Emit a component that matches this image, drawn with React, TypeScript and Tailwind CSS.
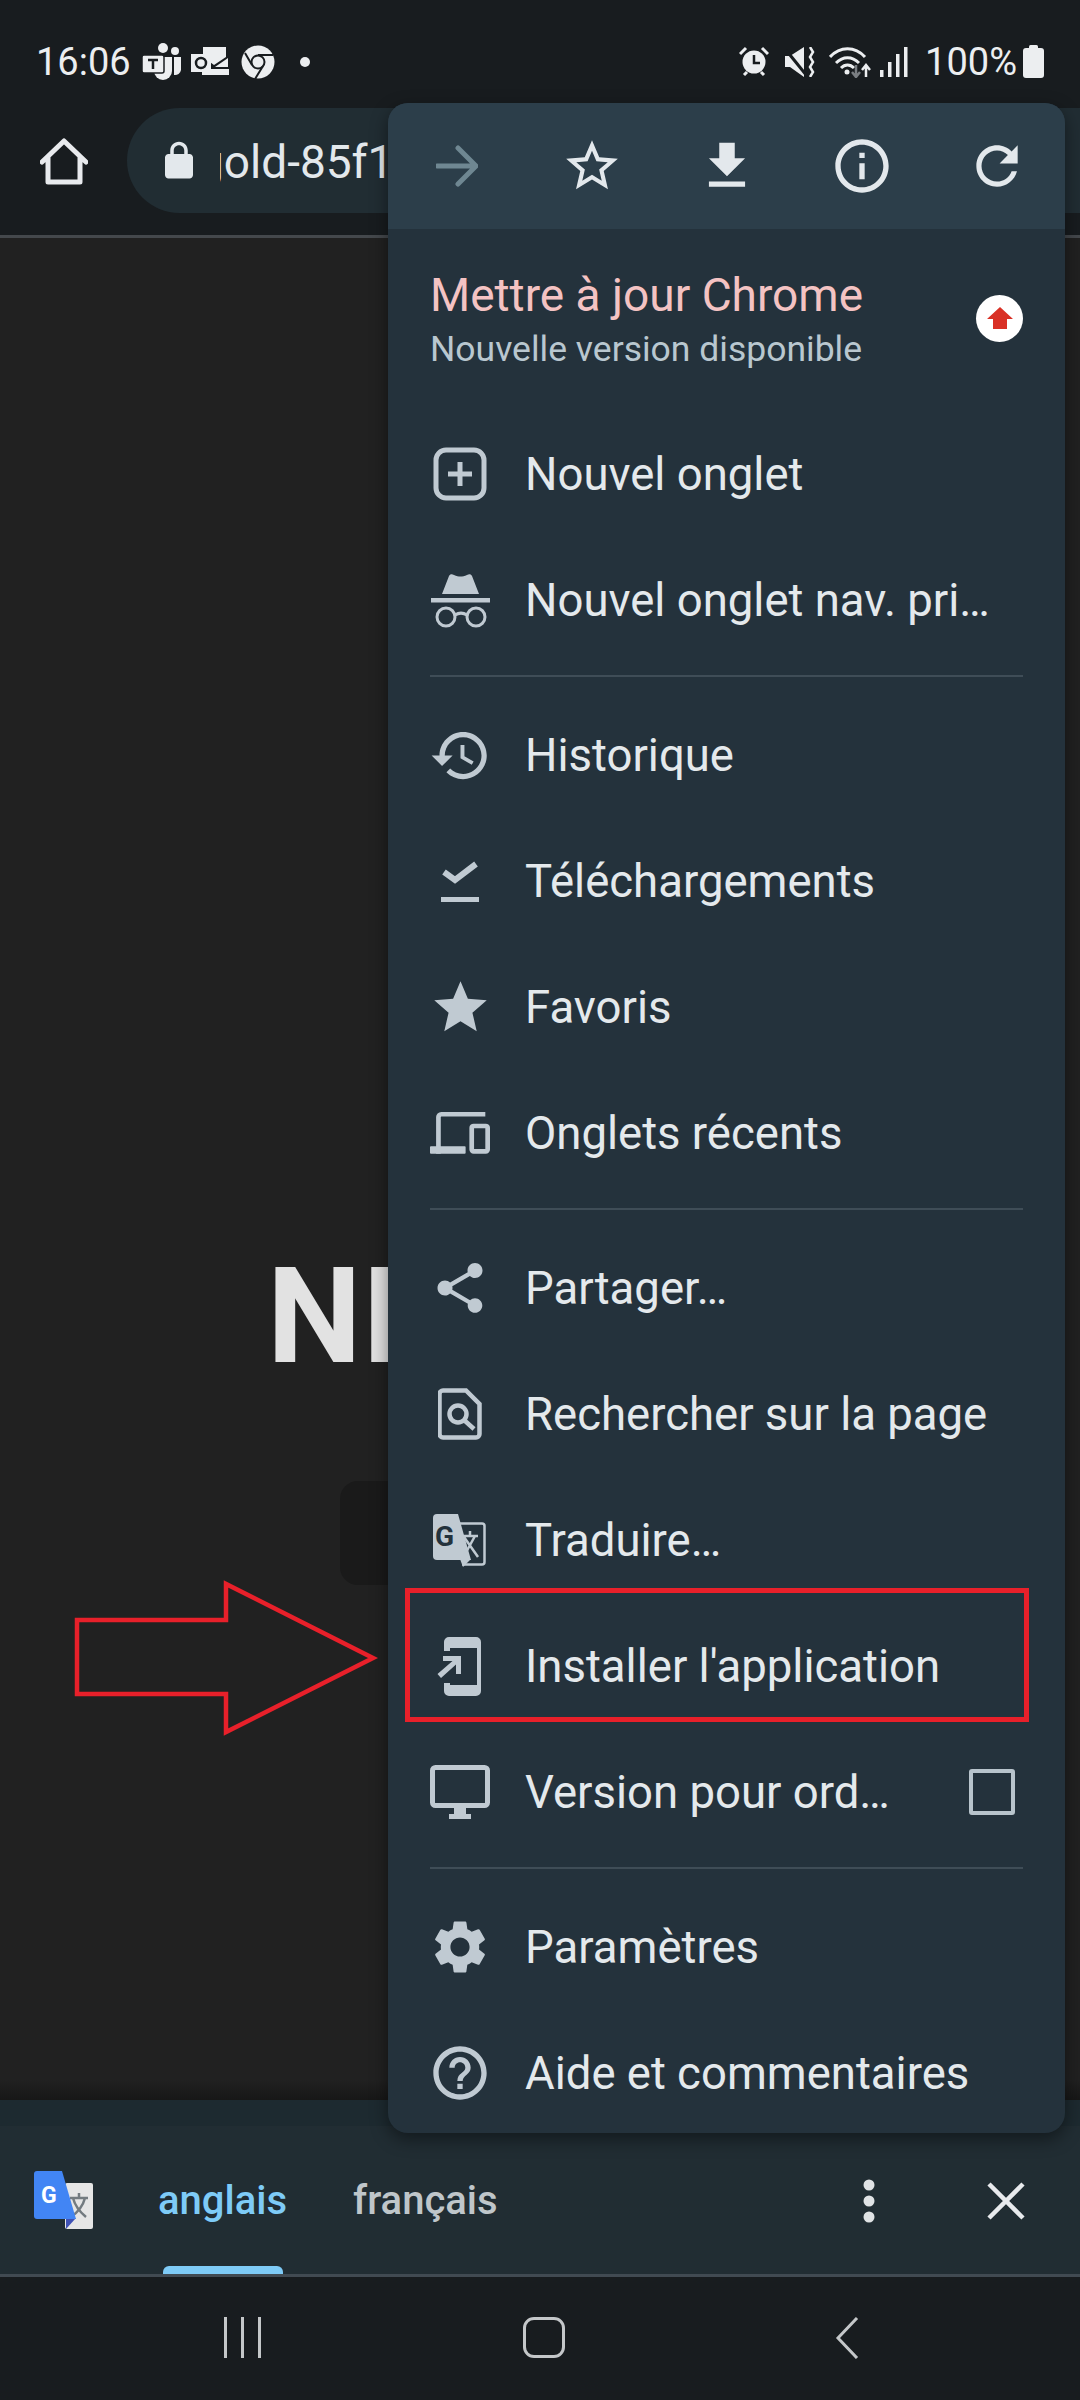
import type { ReactNode } from 'react';

const P = {
  lock: 'M18 8h-1V6c0-2.76-2.24-5-5-5S7 3.24 7 6v2H6c-1.1 0-2 .9-2 2v10c0 1.1.9 2 2 2h12c1.1 0 2-.9 2-2V10c0-1.1-.9-2-2-2zM9 6c0-1.66 1.34-3 3-3s3 1.34 3 3v2H9V6z',
  starOutline: 'M22 9.24l-7.19-.62L12 2 9.19 8.63 2 9.24l5.46 4.73L5.82 21 12 17.27 18.18 21l-1.63-7.03L22 9.24zM12 15.4l-3.76 2.27 1-4.28-3.32-2.88 4.38-.38L12 6.1l1.71 4.04 4.38.38-3.32 2.88 1 4.28L12 15.4z',
  download: 'M19 9h-4V3H9v6H5l7 7 7-7zM5 18v2h14v-2H5z',
  info: 'M11 7h2v2h-2zm0 4h2v6h-2zm1-9C6.48 2 2 6.48 2 12s4.48 10 10 10 10-4.48 10-10S17.52 2 12 2zm0 18c-4.41 0-8-3.59-8-8s3.59-8 8-8 8 3.59 8 8-3.59 8-8 8z',
  refresh: 'M17.65 6.35C16.2 4.9 14.21 4 12 4c-4.42 0-7.99 3.58-7.99 8s3.57 8 7.99 8c3.73 0 6.84-2.55 7.73-6h-2.08c-.82 2.33-3.04 4-5.65 4-3.31 0-6-2.69-6-6s2.69-6 6-6c1.66 0 3.14.69 4.22 1.78L13 11h7V4l-2.35 2.35z',
  history: 'M13 3c-4.97 0-9 4.03-9 9H1l3.89 3.89.07.14L9 12H6c0-3.87 3.13-7 7-7s7 3.13 7 7-3.13 7-7 7c-1.93 0-3.68-.79-4.94-2.06l-1.42 1.42C8.27 19.99 10.51 21 13 21c4.97 0 9-4.03 9-9s-4.03-9-9-9zm-1 5v5l4.28 2.54.72-1.21-3.5-2.08V8H12z',
  star: 'M12 17.27L18.18 21l-1.64-7.03L22 9.24l-7.19-.61L12 2 9.19 8.63 2 9.24l5.46 4.73L5.82 21z',
  share: 'M18 16.08c-.76 0-1.44.3-1.96.77L8.91 12.7c.05-.23.09-.46.09-.7s-.04-.47-.09-.7l7.05-4.11c.54.5 1.25.81 2.04.81 1.66 0 3-1.34 3-3s-1.34-3-3-3-3 1.34-3 3c0 .24.04.47.09.7L8.04 9.81C7.5 9.31 6.79 9 6 9c-1.66 0-3 1.34-3 3s1.34 3 3 3c.79 0 1.5-.31 2.04-.81l7.12 4.16c-.05.21-.08.43-.08.65 0 1.61 1.31 2.92 2.92 2.92 1.61 0 2.92-1.31 2.92-2.92s-1.31-2.92-2.92-2.92z',
  settings: 'M19.14 12.94c.04-.3.06-.61.06-.94 0-.32-.02-.64-.07-.94l2.03-1.58c.18-.14.23-.41.12-.61l-1.92-3.32c-.12-.22-.37-.29-.59-.22l-2.39.96c-.5-.38-1.03-.7-1.62-.94l-.36-2.54c-.04-.24-.24-.41-.48-.41h-3.84c-.24 0-.43.17-.47.41l-.36 2.54c-.59.24-1.13.57-1.62.94l-2.39-.96c-.22-.08-.47 0-.59.22L2.74 8.87c-.12.21-.08.47.12.61l2.03 1.58c-.05.3-.09.63-.09.94s.02.64.07.94l-2.03 1.58c-.18.14-.23.41-.12.61l1.92 3.32c.12.22.37.29.59.22l2.39-.96c.5.38 1.03.7 1.62.94l.36 2.54c.05.24.24.41.48.41h3.84c.24 0 .44-.17.47-.41l.36-2.54c.59-.24 1.13-.56 1.62-.94l2.39.96c.22.08.47 0 .59-.22l1.92-3.32c.12-.22.07-.47-.12-.61l-2.01-1.58zM12 15.6c-1.98 0-3.6-1.62-3.6-3.6s1.62-3.6 3.6-3.6 3.6 1.62 3.6 3.6-1.62 3.6-3.6 3.6z',
  help: 'M11 18h2v-2h-2v2zm1-16C6.48 2 2 6.48 2 12s4.48 10 10 10 10-4.48 10-10S17.52 2 12 2zm0 18c-4.41 0-8-3.59-8-8s3.59-8 8-8 8 3.59 8 8-3.59 8-8 8zm0-14c-2.21 0-4 1.79-4 4h2c0-1.1.9-2 2-2s2 .9 2 2c0 2-3 1.75-3 5h2c0-2.25 3-2.5 3-5 0-2.21-1.79-4-4-4z',
};

function Mi({ d, className }: { d: string; className?: string }) {
  return (
    <svg viewBox="0 0 24 24" fill="currentColor" className={className}>
      <path d={d} />
    </svg>
  );
}

function Draw({ w, h, children, className }: { w: number; h: number; children: ReactNode; className?: string }) {
  return (
    <svg viewBox={`0 0 ${w} ${h}`} width={w} height={h} className={className} fill="none">
      {children}
    </svg>
  );
}

const NewTabIcon = (
  <Draw w={54} h={54}>
    <rect x="3" y="3" width="48" height="48" rx="10" stroke="currentColor" strokeWidth="5" />
    <path d="M27 15v24M15 27h24" stroke="currentColor" strokeWidth="5" />
  </Draw>
);

const IncognitoIcon = (
  <Draw w={59} h={56}>
    <path d="M11 22L18 4c1-2 3-2 5-1 5 2 8 2 13 0 2-1 4-1 5 1l7 18z" fill="currentColor" />
    <rect x="0" y="26" width="59" height="4.500" fill="currentColor" />
    <circle cx="15" cy="45" r="9" stroke="currentColor" strokeWidth="3" />
    <circle cx="45" cy="45" r="9" stroke="currentColor" strokeWidth="3" />
    <path d="M24 43c4-2.500 8-2.500 12 0" stroke="currentColor" strokeWidth="3" />
  </Draw>
);

const DownloadsIcon = (
  <Draw w={38} h={42}>
    <path d="M3 12l11 8L35 4" stroke="currentColor" strokeWidth="6" />
    <rect x="0" y="37" width="38" height="5" fill="currentColor" />
  </Draw>
);

const DevicesIcon = (
  <Draw w={64} h={44}>
    <path d="M9 44V5a3 3 0 0 1 3-3h47" stroke="currentColor" strokeWidth="5" />
    <rect x="0" y="36" width="38" height="8" rx="1" fill="currentColor" />
    <rect x="44.500" y="14.500" width="17" height="27" rx="2" stroke="currentColor" strokeWidth="5" />
  </Draw>
);

const FindIcon = (
  <Draw w={44} h={52}>
    <path d="M5 2.500h23L41.500 16v30a3.500 3.500 0 0 1-3.500 3.500H5A3.500 3.500 0 0 1 1.500 46V6A3.500 3.500 0 0 1 5 2.500z" stroke="currentColor" strokeWidth="4.500" />
    <circle cx="20" cy="26" r="8.500" stroke="currentColor" strokeWidth="4.500" />
    <path d="M26 32l10 9" stroke="currentColor" strokeWidth="4.500" />
  </Draw>
);

const TranslateIcon = (
  <Draw w={54} h={54}>
    <path d="M26 10.500h23a2.500 2.500 0 0 1 2.500 2.500v36a2.500 2.500 0 0 1-2.500 2.500H29" stroke="currentColor" strokeWidth="2.500" />
    <path d="M4 1h21l13 46H4a4 4 0 0 1-4-4V5a4 4 0 0 1 4-4z" fill="currentColor" />
    <path d="M27 46h11l-8 8z" fill="currentColor" />
    <path d="M30 23h15M37 18v5M31 43l11-20M31 24l14 20" stroke="currentColor" strokeWidth="2.500" />
    <text x="2" y="33" fontSize="28" fontWeight="700" fill="#24323c" fontFamily="Roboto, sans-serif">G</text>
  </Draw>
);

const InstallIcon = (
  <Draw w={46} h={60}>
    <path d="M7 15V6a5 5 0 0 1 5-5h27a5 5 0 0 1 5 5v49a5 5 0 0 1-5 5H12a5 5 0 0 1-5-5v-8h6v2h27V12H13v3z" fill="currentColor" />
    <path d="M6 20h18v18h-5V28.500L4 42l-3.500-4L15.500 25H6z" fill="currentColor" />
  </Draw>
);

const DesktopIcon = (
  <Draw w={60} h={54}>
    <rect x="2.500" y="2.500" width="55" height="38" rx="3" stroke="currentColor" strokeWidth="5" />
    <rect x="24" y="42" width="12" height="8" fill="currentColor" />
    <rect x="19" y="49" width="22" height="5" fill="currentColor" />
  </Draw>
);

function GoogleTranslate() {
  return (
    <Draw w={60} h={60}>
      <rect x="31" y="12" width="28" height="46" rx="2" fill="#e6e6e6" />
      <path d="M36 27h18M45 22v5M39 27c2 8 7 14 13 19M51 27c-2 8-7 14-14 19" stroke="#737b80" strokeWidth="2.500" />
      <path d="M32 47h10l-10 11z" fill="#3f51b5" />
      <path d="M3 0h25l14 48H3a3 3 0 0 1-3-3V3a3 3 0 0 1 3-3z" fill="#4285f4" />
      <text x="7" y="32" fontSize="23" fontWeight="700" fill="#ffffff" fontFamily="Roboto, sans-serif">G</text>
    </Draw>
  );
}

function TeamsIcon() {
  return (
    <Draw w={40} h={38}>
      <circle cx="21" cy="5" r="5" fill="#eceef0" />
      <circle cx="33" cy="8" r="4" fill="#eceef0" />
      <path d="M12 14h18v14a9 9 0 0 1-18 0z" fill="#eceef0" />
      <path d="M32 14h7v13a6 6 0 0 1-7 5z" fill="#eceef0" />
      <rect x="0" y="12" width="22" height="18" rx="2" fill="#eceef0" stroke="#181c1f" strokeWidth="1.500" />
      <path d="M6 17h10M11 17v9" stroke="#181c1f" strokeWidth="2.500" />
    </Draw>
  );
}

function OutlookIcon() {
  return (
    <Draw w={38} h={30}>
      <path d="M12 0h23v10L23 18 12 10z" fill="#eceef0" />
      <path d="M11 22h27v6H11z" fill="#eceef0" />
      <path d="M24 20l13-9v9z" fill="#eceef0" />
      <rect x="0" y="7" width="20" height="18" fill="#eceef0" />
      <circle cx="10" cy="16" r="5" stroke="#181c1f" strokeWidth="2.500" />
    </Draw>
  );
}

function ChromeIcon() {
  return (
    <Draw w={34} h={34}>
      <circle cx="17" cy="17" r="16.500" fill="#eceef0" />
      <circle cx="17" cy="17" r="6.500" fill="#eceef0" stroke="#181c1f" strokeWidth="2" />
      <path d="M17 10h15M11 20L4 8M22 21l-8 13" stroke="#181c1f" strokeWidth="2" />
    </Draw>
  );
}

function AlarmIcon() {
  return (
    <Draw w={30} h={31}>
      <circle cx="15" cy="16" r="11.500" fill="#eceef0" />
      <path d="M15 9v8h6" stroke="#181c1f" strokeWidth="2.500" />
      <path d="M1 8l6-6M29 8l-6-6M5 29l3-3M25 29l-3-3" stroke="#eceef0" strokeWidth="3" />
    </Draw>
  );
}

function MuteIcon() {
  return (
    <Draw w={30} h={30}>
      <path d="M0 9h5L19 0v30L5 20H0z" fill="#eceef0" />
      <path d="M1 3l21 26" stroke="#181c1f" strokeWidth="3" />
      <path d="M25 0l3 5-3 5 3 5-3 5 3 5-3 5" stroke="#eceef0" strokeWidth="2.500" />
    </Draw>
  );
}

function WifiIcon() {
  return (
    <Draw w={42} h={32}>
      <path d="M1 11c10-11 25-11 35 0M7 17c7-7 16-7 23 0M12 22c4-4 9-4 13 0" stroke="#eceef0" strokeWidth="3" />
      <circle cx="18" cy="26" r="2.500" fill="#eceef0" />
      <path d="M27 19v11M23 26l4 5 4-5" stroke="#7a7e82" strokeWidth="2.500" />
      <path d="M37 31V20M33 24l4-5 4 5" stroke="#eceef0" strokeWidth="2.500" />
    </Draw>
  );
}

function SignalIcon() {
  return (
    <Draw w={28} h={30}>
      <rect x="0" y="23" width="3.500" height="7" fill="#eceef0" />
      <rect x="8" y="15" width="3.500" height="15" fill="#eceef0" />
      <rect x="16" y="7" width="3.500" height="23" fill="#eceef0" />
      <rect x="24" y="0" width="3.500" height="30" fill="#eceef0" />
    </Draw>
  );
}

function BatteryIcon() {
  return (
    <Draw w={21} h={33}>
      <rect x="6" y="0" width="9" height="4" rx="1.500" fill="#eceef0" />
      <rect x="0" y="3" width="21" height="30" rx="3" fill="#eceef0" />
    </Draw>
  );
}

function Row({ icon, label, trailing }: { icon: ReactNode; label: string; trailing?: ReactNode }) {
  return (
    <div className="flex h-[126px] items-center pl-[42px] pr-[50px]">
      <div className="flex h-[64px] w-[60px] shrink-0 items-center justify-center text-[#c0cad2]">{icon}</div>
      <span className="ml-[35px] flex-1 truncate pt-[2px] text-[45.500px] text-[#e4e9ec]">{label}</span>
      {trailing}
    </div>
  );
}

function Divider() {
  return <div className="mb-[15px] ml-[42px] mr-[42px] mt-[12px] h-[2px] bg-[#3f4d57]" />;
}

function Menu() {
  const icon = 'h-[63px] w-[63px] shrink-0';
  const slot = 'flex w-[135px] shrink-0 justify-center';
  return (
    <div className="absolute left-[388px] top-[103px] h-[2030px] w-[677px] overflow-hidden rounded-[20px] bg-[#24323c] shadow-[0_6px_18px_rgba(0,0,0,0.45)]">
      <div className="flex h-[126px] items-center bg-[#2c3e4a] pl-[1px] text-[#e3e8ec]">
        <div className={slot}>
          <svg viewBox="0 0 42 42" width="42" height="42" fill="none" className="text-[#6f8792]">
            <path d="M1 21h38M22 3l18 18-18 18" stroke="currentColor" strokeWidth="5" strokeLinecap="round" strokeLinejoin="round" />
          </svg>
        </div>
        <div className={slot}><Mi d={P.starOutline} className="h-[62px] w-[62px]" /></div>
        <div className={slot}><Mi d={P.download} className="h-[62px] w-[62px]" /></div>
        <div className={slot}><Mi d={P.info} className="h-[64px] w-[64px]" /></div>
        <div className={slot}><Mi d={P.refresh} className="h-[62px] w-[62px]" /></div>
      </div>

      <div className="flex h-[182px] items-center justify-between pl-[42px] pr-[42px]">
        <div className="-mt-[2px] flex flex-col">
          <span className="text-[46px] leading-[54px] text-[#f4c3c3]">Mettre à jour Chrome</span>
          <span className="mt-[6px] text-[35.500px] leading-[42px] text-[#b9c7cf]">Nouvelle version disponible</span>
        </div>
        <div className="-mt-[4px] flex h-[47px] w-[47px] items-center justify-center rounded-full bg-white">
          <svg viewBox="0 0 28 28" width="28" height="28">
            <path d="M14 3L27 15h-6v10H7V15H1z" fill="#d93025" />
          </svg>
        </div>
      </div>

      <Row icon={NewTabIcon} label="Nouvel onglet" />
      <Row icon={IncognitoIcon} label="Nouvel onglet nav. pri…" />
      <Divider />
      <Row icon={<Mi d={P.history} className={icon} />} label="Historique" />
      <Row icon={DownloadsIcon} label="Téléchargements" />
      <Row icon={<Mi d={P.star} className={icon} />} label="Favoris" />
      <Row icon={DevicesIcon} label="Onglets récents" />
      <Divider />
      <Row icon={<Mi d={P.share} className="h-[60px] w-[60px] shrink-0" />} label="Partager…" />
      <Row icon={FindIcon} label="Rechercher sur la page" />
      <Row icon={TranslateIcon} label="Traduire…" />
      <Row icon={InstallIcon} label="Installer l'application" />
      <Row
        icon={DesktopIcon}
        label="Version pour ord…"
        trailing={<div className="h-[46px] w-[46px] rounded-[3px] border-[4px] border-[#b8c4cc]" />}
      />
      <Divider />
      <Row icon={<Mi d={P.settings} className="h-[64px] w-[64px] shrink-0" />} label="Paramètres" />
      <Row icon={<Mi d={P.help} className="h-[64px] w-[64px] shrink-0" />} label="Aide et commentaires" />
    </div>
  );
}

export default function App() {
  return (
    <div className="relative flex h-[2400px] w-[1080px] flex-col overflow-hidden bg-[#181c1f] font-['Roboto',sans-serif]">
      {/* status bar */}
      <div className="flex h-[108px] shrink-0 items-center pl-[36px] pr-[36px] pt-[15px] text-[#eceef0]">
        <span className="text-[38px] leading-none">16:06</span>
        <div className="ml-[11px]"><TeamsIcon /></div>
        <div className="ml-[9px]"><OutlookIcon /></div>
        <div className="ml-[12px]"><ChromeIcon /></div>
        <div className="ml-[25px] h-[10px] w-[10px] rounded-full bg-[#eceef0]" />
        <div className="flex-1" />
        <AlarmIcon />
        <div className="ml-[16px]"><MuteIcon /></div>
        <div className="ml-[14px]"><WifiIcon /></div>
        <div className="ml-[9px]"><SignalIcon /></div>
        <span className="ml-[17px] text-[38px] leading-none">100%</span>
        <div className="ml-[6px]"><BatteryIcon /></div>
      </div>

      {/* toolbar */}
      <div className="flex h-[127px] shrink-0 items-start pl-[40px]">
        <svg viewBox="0 0 48 48" width="48" height="48" fill="none" className="mt-[30px]">
          <path d="M2 24L24 3l22 21M8 19v25h32V19" stroke="#e8eaed" strokeWidth="5" strokeLinejoin="round" strokeLinecap="round" />
        </svg>
        <div className="ml-[39px] flex h-[105px] flex-1 items-center rounded-l-[53px] bg-[#212d33] pl-[31px] text-[#e3e8ec]">
          <Mi d={P.lock} className="h-[42px] w-[42px] shrink-0" />
          <div className="ml-[20px] w-[172px] overflow-hidden whitespace-nowrap pt-[2px] text-[46px] leading-none">
            <span className="-ml-[22px] inline-block">gold-85f1</span>
          </div>
        </div>
      </div>
      <div className="h-[3px] shrink-0 bg-[#44484c]" />

      {/* page behind the menu */}
      <div className="flex flex-1 flex-col bg-[#212121] pl-[267px]">
        <div className="mt-[1012px] text-[134px] font-bold leading-[134px] text-[#e2e2e2]">NI</div>
        <div className="ml-[73px] mt-[97px] h-[104px] w-[200px] rounded-[18px] bg-[#1a1a1a]" />
        <div className="-ml-[267px] mt-[495px] h-[20px] w-[1080px] bg-gradient-to-b from-[#212121] to-[#171717]" />
      </div>

      {/* translate bar */}
      <div className="h-[26px] shrink-0 bg-[#1d2a30]" />
      <div className="flex h-[148px] shrink-0 items-center bg-[#212d33] pt-[2px] pl-[34px] pr-[55px]">
        <GoogleTranslate />
        <div className="relative ml-[64px] flex h-full items-center">
          <span className="text-[40px] font-medium text-[#7ecbf7]">anglais</span>
          <div className="absolute bottom-0 left-[5px] h-[8px] w-[120px] rounded-t-[6px] bg-[#7ecbf7]" />
        </div>
        <span className="ml-[66px] text-[40px] font-medium text-[#bfc6ca]">français</span>
        <div className="flex-1" />
        <svg viewBox="0 0 12 44" width="12" height="44" fill="#e0e3e5">
          <circle cx="6" cy="6" r="5.500" />
          <circle cx="6" cy="22" r="5.500" />
          <circle cx="6" cy="38" r="5.500" />
        </svg>
        <svg viewBox="0 0 38 38" width="38" height="38" fill="none" className="ml-[112px]">
          <path d="M2 2l34 34M36 2L2 36" stroke="#e8eaed" strokeWidth="4.500" />
        </svg>
      </div>
      <div className="h-[3px] shrink-0 bg-[#414a52]" />

      {/* nav bar */}
      <div className="flex h-[123px] shrink-0 items-start pl-[224px] pt-[40px]">
        <div className="flex h-[41px] gap-[14px]">
          <div className="h-full w-[3px] bg-[#c4c7c9]" />
          <div className="h-full w-[3px] bg-[#c4c7c9]" />
          <div className="h-full w-[3px] bg-[#c4c7c9]" />
        </div>
        <div className="ml-[262px] h-[41px] w-[42px] rounded-[11px] border-[3px] border-[#c4c7c9]" />
        <svg viewBox="0 0 24 42" width="24" height="42" fill="none" className="ml-[270px]">
          <path d="M22 1L3 21l19 20" stroke="#c4c7c9" strokeWidth="3" />
        </svg>
      </div>

      <Menu />

      {/* red annotations */}
      <div className="absolute left-[405px] top-[1588px] h-[134px] w-[624px] border-[5px] border-[#e8202a]" />
      <svg viewBox="0 0 320 160" width="320" height="160" fill="none" className="absolute left-[70px] top-[1578px]">
        <path d="M7 42h149V6l147 74-147 74v-38H7z" stroke="#e8202a" strokeWidth="4.500" />
      </svg>
    </div>
  );
}
